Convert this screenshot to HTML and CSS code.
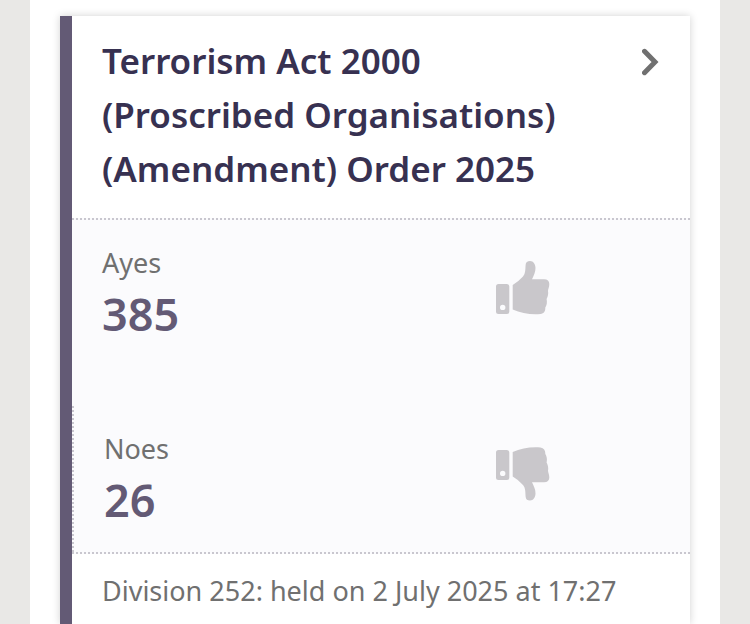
FILE: index.html
```html
<!DOCTYPE html>
<html lang="en">
<head>
<meta charset="utf-8">
<meta name="viewport" content="width=device-width, initial-scale=1">
<title>Divisions</title>
<link rel="stylesheet" href="styles.css">
</head>
<body>
<main class="page">
  <a class="card" href="#division-252">
    <div class="card-header">
      <h2 class="title">Terrorism Act 2000 (Proscribed Organisations) (Amendment) Order 2025</h2>
      <svg class="chevron" viewBox="0 0 18 28" aria-hidden="true"><path d="M2.500 3.300 13 14 2.500 24.700"/></svg>
    </div>
    <div class="votes">
      <div class="vote">
        <div>
          <div class="label">Ayes</div>
          <div class="count">385</div>
        </div>
        <svg class="thumb" viewBox="0 0 54 54" aria-hidden="true">
          <path fill-rule="evenodd" d="M2.500 23H11Q13.300 23 13.300 25.500V50.500Q13.300 53 11 53H2.500Q0 53 0 50.500V25.500Q0 23 2.500 23ZM6.700 43.700A2.700 2.700 0 1 0 6.700 49.100A2.700 2.700 0 1 0 6.700 43.700Z"/>
          <path d="M16.700 24Q22 21 27 15.500C29.500 12.500 29.300 9 29.600 4C29.800 1 31.500 0 34 0C37.500 0 39.500 3.500 39.500 7C39.500 11 38 14 36 18.200H48C51.500 18.200 53.300 20 53.300 23C53.300 26.500 52 28 52 30C52.500 32.500 52 35.500 50.600 38C51.200 41 51 44 49.300 46.500C49.500 50 48 52.500 44.500 53C35 54 25 52 16.700 48.500Z"/>
        </svg>
      </div>
      <div class="vote vote-noes">
        <div>
          <div class="label">Noes</div>
          <div class="count">26</div>
        </div>
        <svg class="thumb" viewBox="0 0 54 54" aria-hidden="true">
          <path fill-rule="evenodd" d="M2.500 3H11Q13.300 3 13.300 5.500V30.500Q13.300 33 11 33H2.500Q0 33 0 30.500V5.500Q0 3 2.500 3ZM6.700 23.700A2.700 2.700 0 1 0 6.700 29.100A2.700 2.700 0 1 0 6.700 23.700Z"/>
          <path transform="matrix(1 0 0 -1 0 53.500)" d="M16.700 24Q22 21 27 15.500C29.500 12.500 29.300 9 29.600 4C29.800 1 31.500 0 34 0C37.500 0 39.500 3.500 39.500 7C39.500 11 38 14 36 18.200H48C51.500 18.200 53.300 20 53.300 23C53.300 26.500 52 28 52 30C52.500 32.500 52 35.500 50.600 38C51.200 41 51 44 49.300 46.500C49.500 50 48 52.500 44.500 53C35 54 25 52 16.700 48.500Z"/>
        </svg>
      </div>
    </div>
    <div class="card-footer">Division 252: held on 2 July 2025 at 17:27</div>
  </a>
</main>
</body>
</html>
```
FILE: styles.css
```css
* {
  box-sizing: border-box;
}

body {
  margin: 0;
  background: #e9e8e6;
  color: #707070;
  font-family: "Noto Sans", "Liberation Sans", sans-serif;
}

.page {
  display: flex;
  flex-direction: column;
  min-height: 100vh;
  margin: 0 30px;
  padding: 16px 30px 0;
  background: #fff;
}

.card {
  display: flex;
  flex: 1;
  flex-direction: column;
  border-left: 12px solid #635a75;
  background: #fff;
  box-shadow: 0 0 8px rgba(0, 0, 0, 0.18);
  color: inherit;
  text-decoration: none;
}

.card-header {
  display: flex;
  justify-content: space-between;
  gap: 24px;
  padding: 18px 30px 22px;
}

.title {
  max-width: 480px;
  margin: 0;
  color: #373151;
  font-size: 35px;
  font-weight: 600;
  line-height: 54px;
}

.chevron {
  flex: none;
  width: 18px;
  height: 28px;
  margin-top: 14px;
  fill: none;
  stroke: #707070;
  stroke-width: 5;
  stroke-linecap: round;
}

.votes {
  border-top: 2px dotted #c9c7cf;
  border-bottom: 2px dotted #c9c7cf;
  background: #fbfbfd;
}

.vote {
  display: grid;
  grid-template-columns: 12fr 5fr;
  padding: 22px 30px 66px;
}

.vote-noes {
  padding-bottom: 26px;
  border-left: 2px dotted #c9c7cf;
}

.label {
  font-size: 27px;
  line-height: 42px;
}

.count {
  margin-top: 4px;
  color: #635a75;
  font-size: 45px;
  font-weight: 600;
  line-height: 52px;
}

.thumb {
  width: 54px;
  height: 54px;
  margin-top: 19px;
  fill: #c9c7cb;
}

.card-footer {
  padding: 16px 30px 12px;
  font-size: 27px;
  line-height: 42px;
}
```
